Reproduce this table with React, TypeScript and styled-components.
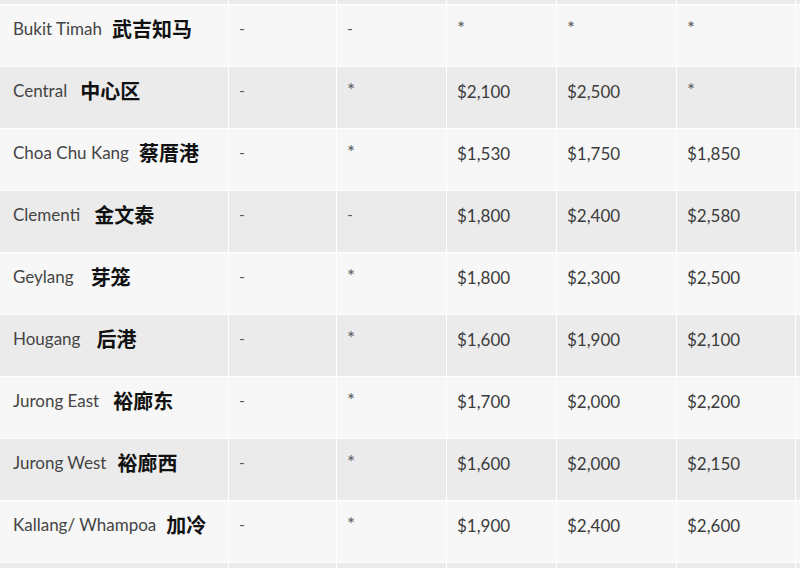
import React from "react";
import styled, { createGlobalStyle } from "styled-components";

const GlobalStyle = createGlobalStyle`
    html, body {
        margin: 0;
        padding: 0;
        background: #ffffff;
        overflow: hidden;
    }
`;

interface Row {
    name: string;
    zh: string;
    gap?: number;
    cells: string[];
}

const rows: Row[] = [
    { name: "Bukit Timah", zh: "武吉知马", gap: 10, cells: ["-", "-", "*", "*", "*"] },
    { name: "Central", zh: "中心区", gap: 13, cells: ["-", "*", "$2,100", "$2,500", "*"] },
    { name: "Choa Chu Kang", zh: "蔡厝港", gap: 10, cells: ["-", "*", "$1,530", "$1,750", "$1,850"] },
    { name: "Clementi", zh: "金文泰", gap: 14, cells: ["-", "-", "$1,800", "$2,400", "$2,580"] },
    { name: "Geylang", zh: "芽笼", gap: 17, cells: ["-", "*", "$1,800", "$2,300", "$2,500"] },
    { name: "Hougang", zh: "后港", gap: 16, cells: ["-", "*", "$1,600", "$1,900", "$2,100"] },
    { name: "Jurong East", zh: "裕廊东", gap: 14, cells: ["-", "*", "$1,700", "$2,000", "$2,200"] },
    { name: "Jurong West", zh: "裕廊西", gap: 11, cells: ["-", "*", "$1,600", "$2,000", "$2,150"] },
    { name: "Kallang/ Whampoa", zh: "加冷", gap: 10, cells: ["-", "*", "$1,900", "$2,400", "$2,600"] }
];

const Table = styled.div`
    display: grid;
    grid-template-columns: 228px 107px 109px 109px 119px 118px 1fr;
    grid-auto-rows: 61px;
    grid-template-rows: 4px;
    gap: 1px;
    width: 800px;
    height: 568px;
    background: #ffffff;
    overflow: hidden;
`;

const Cell = styled.div<{ $shade: boolean; $first?: boolean }>`
    background: ${(p) => (p.$shade ? "#ebebeb" : "#f7f7f7")};
    padding: ${(p) => (p.$first ? "11px 0 0 13px" : "14px 0 0 10px")};
    box-sizing: border-box;
    font-family: "Lato", "Noto Sans CJK SC", sans-serif;
    font-size: 17px;
    line-height: 22px;
    color: #3c3c3c;
    white-space: nowrap;
    overflow: hidden;
`;

const Name = styled.span`
    font-size: 17px;
    color: #444444;
`;

const Zh = styled.span<{ $gap: number }>`
    margin-left: ${(p) => p.$gap}px;
    font-family: "Noto Sans CJK SC", sans-serif;
    font-weight: 700;
    font-size: 20px;
    color: #111111;
    position: relative;
    top: 2px;
`;

const Mark = styled.span<{ $star: boolean }>`
    font-size: ${(p) => (p.$star ? "19px" : "16px")};
    color: #5a5a5a;
    position: relative;
    top: -2px;
`;

const App = () => {
    return (
        <>
            <GlobalStyle />
            <Table>
                {Array.from({ length: 7 }).map((_, i) => (
                    <Cell key={`top-${i}`} $shade={true} style={{ padding: 0 }} />
                ))}
                {rows.map((row, r) => {
                    const shade = r % 2 === 1;
                    return (
                        <React.Fragment key={row.name}>
                            <Cell $shade={shade} $first>
                                <Name>{row.name}</Name>
                                <Zh $gap={row.gap ?? 10}>{row.zh}</Zh>
                            </Cell>
                            {row.cells.map((c, i) => (
                                <Cell key={i} $shade={shade}>
                                    {c === "-" || c === "*" ? <Mark $star={c === "*"}>{c}</Mark> : c}
                                </Cell>
                            ))}
                            <Cell $shade={shade} />
                        </React.Fragment>
                    );
                })}
                {Array.from({ length: 7 }).map((_, i) => (
                    <Cell key={`bottom-${i}`} $shade={true} />
                ))}
            </Table>
        </>
    );
};

export default App;
